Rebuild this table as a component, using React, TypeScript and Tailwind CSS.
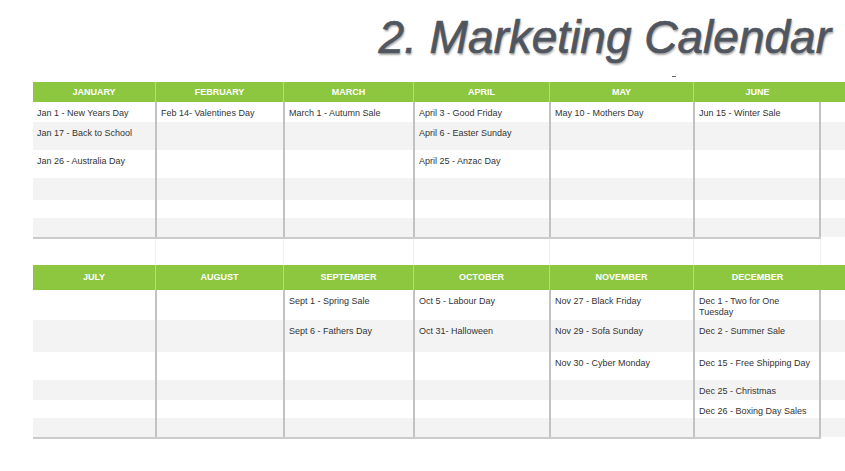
type Half = {
    months: string[];
    headerH: string;
    rows: string[];
    cells: string[][][];
};

const widths = ["w-[122px]", "w-[128px]", "w-[130px]", "w-[136px]", "w-[144px]", "w-[128px]"];

const top: Half = {
    months: ["JANUARY", "FEBRUARY", "MARCH", "APRIL", "MAY", "JUNE"],
    headerH: "h-[20px]",
    rows: ["h-[20px]", "h-[28px]", "h-[28px]", "h-[22px]", "h-[18px]", "h-[19px]"],
    cells: [
        [["Jan 1 - New Years Day"], ["Feb 14- Valentines Day"], ["March 1 - Autumn Sale"], ["April 3 - Good Friday"], ["May 10 - Mothers Day"], ["Jun 15 - Winter Sale"]],
        [["Jan 17 - Back to School"], [], [], ["April 6 - Easter Sunday"], [], []],
        [["Jan 26 - Australia Day"], [], [], ["April 25 - Anzac Day"], [], []],
        [[], [], [], [], [], []],
        [[], [], [], [], [], []],
        [[], [], [], [], [], []],
    ],
};

const bottom: Half = {
    months: ["JULY", "AUGUST", "SEPTEMBER", "OCTOBER", "NOVEMBER", "DECEMBER"],
    headerH: "h-[25px]",
    rows: ["h-[30px]", "h-[32px]", "h-[28px]", "h-[20px]", "h-[18px]", "h-[19px]"],
    cells: [
        [[], [], ["Sept 1 - Spring Sale"], ["Oct 5 - Labour Day"], ["Nov 27 - Black Friday"], ["Dec 1 - Two for One", "Tuesday"]],
        [[], [], ["Sept 6 - Fathers Day"], ["Oct 31- Halloween"], ["Nov 29 - Sofa Sunday"], ["Dec 2 - Summer Sale"]],
        [[], [], [], [], ["Nov 30 - Cyber Monday"], ["Dec 15 - Free Shipping Day"]],
        [[], [], [], [], [], ["Dec 25 - Christmas"]],
        [[], [], [], [], [], ["Dec 26 - Boxing Day Sales"]],
        [[], [], [], [], [], []],
    ],
};

const Table = ({ half }: { half: Half }) => {
    return (
        <div className="flex flex-col">
            {/* month header */}
            <div className={`flex bg-[#8dc63f] ${half.headerH}`}>
                {half.months.map((m, i) => (
                    <div
                        key={m}
                        className={`${widths[i]} flex items-center justify-center pt-[1px] text-[9px] font-bold text-white ${i > 0 ? "border-l border-[#b5dc80]" : ""}`}
                    >
                        {m}
                    </div>
                ))}
            </div>
            {half.rows.map((h, r) => (
                <div key={r} className={`flex ${h} ${r % 2 === 1 ? "bg-[#f3f3f3]" : "bg-white"}`}>
                    {half.cells[r].map((lines, i) => (
                        <div
                            key={i}
                            className={`${widths[i]} pl-[4px] pt-[5px] text-[9px] leading-[12px] text-[#333] ${i > 0 ? "border-l-2 border-[#c2c2c2]" : ""} ${i === 5 ? "border-r-2" : ""}`}
                        >
                            {lines.map((l) => (
                                <div key={l} className={l === "Tuesday" ? "leading-[11px]" : ""}>{l}</div>
                            ))}
                        </div>
                    ))}
                </div>
            ))}
            <div className="h-[2px] w-[788px] bg-[#cbcbcb]" />
        </div>
    );
}

export default function App() {
    return (
        <div className="w-[845px] h-[471px] bg-white overflow-hidden font-['Liberation_Sans',Arial,sans-serif]">
            {/* title */}
            <div className="flex justify-end pr-[14px] pt-[11px] h-[70px]">
                <h1 className="text-[46px] leading-[52px] italic text-[#50565f] [-webkit-text-stroke:0.7px_#50565f] [text-shadow:1px_2px_2px_rgba(0,0,0,0.35)]">
                    2. Marketing Calendar
                </h1>
            </div>
            <div className="h-[12px] pl-[672px] pt-[6px]">
                <div className="w-[4px] h-[1px] bg-[#666]" />
            </div>

            <div className="pl-[33px]">
                <Table half={top} />
                {/* gap row between the two halves */}
                <div className="flex h-[26px]">
                    {widths.map((w, i) => (
                        <div key={i} className={`${w} ${i > 0 ? "border-l border-[#eeeeee]" : ""} ${i === 5 ? "border-r border-[#eeeeee]" : ""}`} />
                    ))}
                </div>
                <Table half={bottom} />
            </div>
        </div>
    );
}
